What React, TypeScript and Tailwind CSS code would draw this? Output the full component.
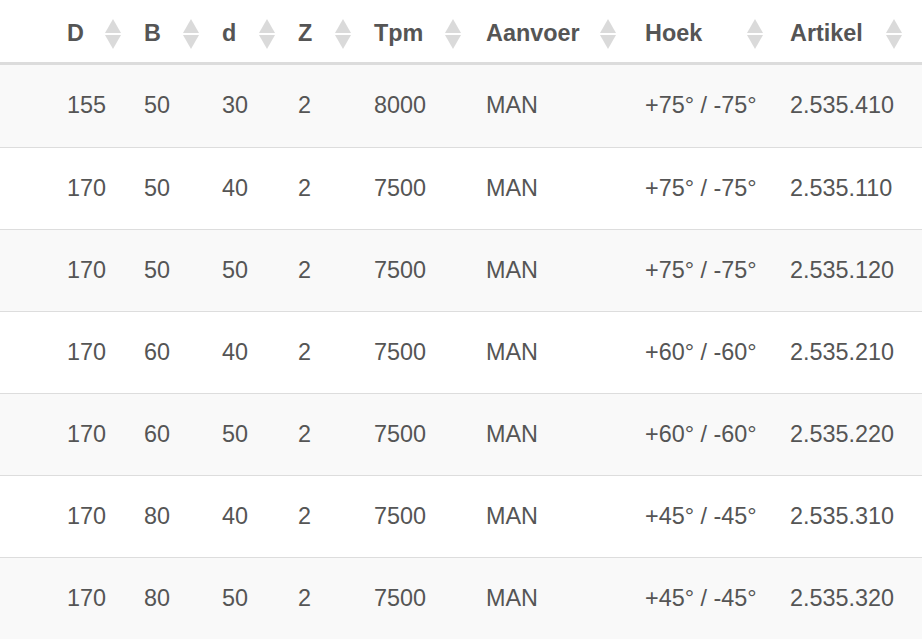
import React from "react"

type Col = { label: string; arrow: string }

const cols: Col[] = [
  { label: "D", arrow: "left-[38px]" },
  { label: "B", arrow: "left-[39px]" },
  { label: "d", arrow: "left-[37px]" },
  { label: "Z", arrow: "left-[37px]" },
  { label: "Tpm", arrow: "left-[71px]" },
  { label: "Aanvoer", arrow: "left-[114px]" },
  { label: "Hoek", arrow: "left-[102px]" },
  { label: "Artikel", arrow: "left-[96px]" },
]

const rows = [
  ["155", "50", "30", "2", "8000", "MAN", "+75° / -75°", "2.535.410"],
  ["170", "50", "40", "2", "7500", "MAN", "+75° / -75°", "2.535.110"],
  ["170", "50", "50", "2", "7500", "MAN", "+75° / -75°", "2.535.120"],
  ["170", "60", "40", "2", "7500", "MAN", "+60° / -60°", "2.535.210"],
  ["170", "60", "50", "2", "7500", "MAN", "+60° / -60°", "2.535.220"],
  ["170", "80", "40", "2", "7500", "MAN", "+45° / -45°", "2.535.310"],
  ["170", "80", "50", "2", "7500", "MAN", "+45° / -45°", "2.535.320"],
]

const grid = "grid grid-cols-[77px_78px_76px_76px_112px_159px_145px_1fr] pl-[67px]"

function SortIcon() {
  return (
    <svg width="16" height="32" viewBox="0 0 16 32" className="block">
      <polygon points="8,1 16,15 0,15" fill="#dadada" />
      <polygon points="0,17 16,17 8,31" fill="#dadada" />
    </svg>
  )
}

export default function App() {
  return (
    <div
      className="w-[922px] h-[642px] overflow-hidden bg-white text-[#555] text-[23.4px]"
      style={{ fontFamily: '"Liberation Sans", Arial, sans-serif' }}
    >
      {/* header */}
      <div className={`${grid} h-[65px] border-b-[3px] border-[#dcdcdc]`}>
        {cols.map((c) => (
          <div key={c.label} className="relative flex items-center pt-[6px] font-bold">
            <span>{c.label}</span>
            <span className={`absolute top-[18px] ${c.arrow}`}>
              <SortIcon />
            </span>
          </div>
        ))}
      </div>

      {/* body */}
      {rows.map((r, i) => (
        <div
          key={i}
          className={`${grid} h-[82px] ${i > 0 ? "border-t border-[#dddddd]" : ""} ${
            i % 2 === 0 ? "bg-[#f9f9f9]" : "bg-white"
          }`}
        >
          {r.map((v, j) => (
            <div key={j} className="flex items-center whitespace-nowrap">
              {v}
            </div>
          ))}
        </div>
      ))}
    </div>
  )
}
